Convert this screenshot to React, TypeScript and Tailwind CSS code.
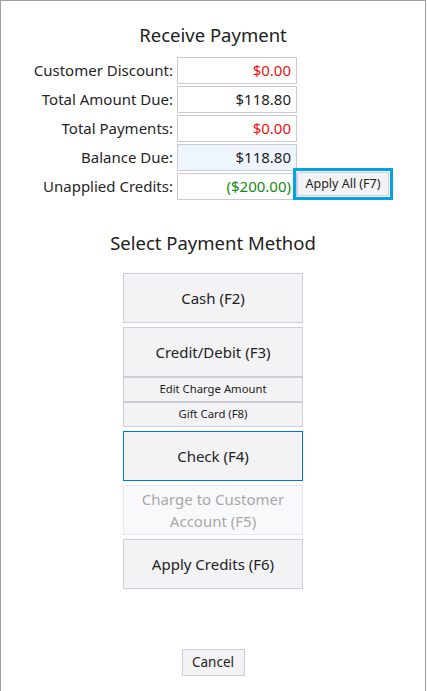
const rows = [
  { label: "Customer Discount:", value: "$0.00", tone: "text-[#f01010]", bg: "bg-white" },
  { label: "Total Amount Due:", value: "$118.80", tone: "text-[#222222]", bg: "bg-white" },
  { label: "Total Payments:", value: "$0.00", tone: "text-[#f01010]", bg: "bg-white" },
  { label: "Balance Due:", value: "$118.80", tone: "text-[#222222]", bg: "bg-[#eef5fd]" },
  { label: "Unapplied Credits:", value: "($200.00)", tone: "text-[#168a16]", bg: "bg-white" },
];

const App = () => {
  return (
    <div
      className="w-[427px] h-[691px] bg-white text-[#222222]"
      style={{ fontFamily: '"Noto Sans", "Open Sans", sans-serif' }}
    >
      <div className="w-[426px] h-[691px] border-l border-t border-r border-[#a0a0a0] flex flex-col items-center">
        <h1 className="mt-[20px] text-[18.5px] leading-[28px] text-[#222222]">Receive Payment</h1>

        <div className="mt-[8px] self-start grid grid-cols-[172px_120px_auto] gap-x-[4px] gap-y-[2px]">
          {rows.map((r, i) => (
            <div key={i} className="contents">
              <div className="h-[27px] flex items-center justify-end text-[15px] text-[#262626]">
                {r.label}
              </div>
              <div
                className={`h-[27px] border border-[#cacad6] ${r.bg} flex items-center justify-end pr-[5px] text-[15px] ${r.tone}`}
              >
                {r.value}
              </div>
              {i === 4 ? (
                <div className="h-[27px] -ml-[4px] flex items-start">
                  <button className="mt-[-1px] w-[92px] h-[24px] bg-[#f3f3f6] border border-[#d2d2dc] outline-[3px] outline-solid outline-[#02a2e6] outline-offset-[1px] text-[12.5px] text-[#222222] flex items-center justify-center">
                    Apply All (F7)
                  </button>
                </div>
              ) : (
                <div />
              )}
            </div>
          ))}
        </div>

        <h2 className="mt-[29px] text-[18.5px] leading-[28px] text-[#222222]">Select Payment Method</h2>

        <div className="mt-[16px] w-[180px] flex flex-col gap-[4px]">
          <button className="h-[50px] bg-[#f3f3f6] border border-[#cdcdd9] text-[15px]">Cash (F2)</button>
          <div className="flex flex-col">
            <button className="h-[50px] bg-[#f3f3f6] border border-[#cdcdd9] text-[15px]">Credit/Debit (F3)</button>
            <button className="h-[25px] bg-[#f3f3f6] border border-[#cdcdd9] text-[11.3px]">Edit Charge Amount</button>
            <button className="h-[25px] bg-[#f3f3f6] border border-[#cdcdd9] text-[11.3px]">Gift Card (F8)</button>
          </div>
          <button className="h-[50px] bg-[#f3f3f6] border border-[#0078d7] text-[15px]">Check (F4)</button>
          <button className="h-[50px] bg-[#f9f9fb] border border-[#e6e6ee] text-[15px] leading-[22px] text-[#a8a8a8]">
            Charge to Customer
            <br />
            Account (F5)
          </button>
          <button className="h-[50px] bg-[#f3f3f6] border border-[#cdcdd9] text-[15px]">Apply Credits (F6)</button>
        </div>

        <button className="mt-[60px] w-[63px] h-[27px] bg-[#f3f3f6] border border-[#cdcdd9] text-[13.5px]">Cancel</button>
      </div>
    </div>
  );
};

export default App;
